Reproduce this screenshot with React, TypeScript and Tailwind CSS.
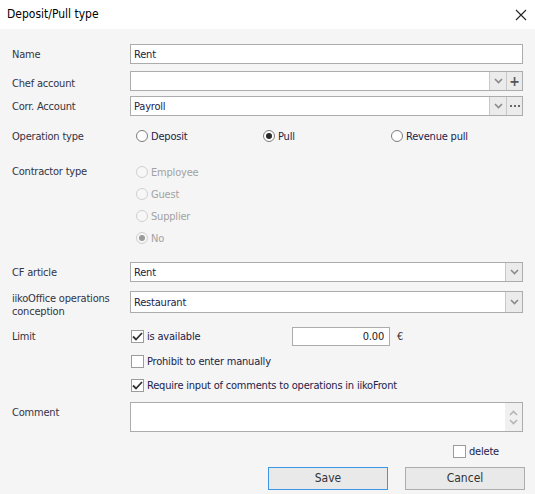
import React from 'react';

const font = "font-['DejaVu_Sans_Condensed','DejaVu_Sans',sans-serif]";

function Chevron({ light }: { light?: boolean }) {
  return (
    <svg width="9" height="6" viewBox="0 0 9 6">
      <path d="M1 1l3.5 3.5L8 1" fill="none" stroke={light ? '#b5b5b5' : '#8a8a8a'} strokeWidth="1.6" />
    </svg>
  );
}

function Field({ value, buttons }: { value?: string; buttons?: React.ReactNode }) {
  return (
    <div className="flex h-[20px] flex-1 border border-[#acacac] bg-white">
      <div className="flex flex-1 items-center pl-[3px] text-[#22224a]">{value}</div>
      {buttons}
    </div>
  );
}

function DropBtn() {
  return (
    <div className="flex w-[17px] items-center justify-center border-l border-[#c8c8c8] bg-[#ebebeb]">
      <Chevron />
    </div>
  );
}

function Radio({ label, checked, disabled, className = '' }: { label: string; checked?: boolean; disabled?: boolean; className?: string }) {
  return (
    <div className={`flex items-center gap-[3px] ${className}`}>
      <div
        className={`flex h-[12px] w-[12px] items-center justify-center rounded-full border ${
          disabled ? 'border-[#cfcfcf] bg-[#f7f7f7]' : 'border-[#7c7c7c] bg-white'
        }`}
      >
        {checked && <div className={`h-[6px] w-[6px] rounded-full ${disabled ? 'bg-[#9a9a9a]' : 'bg-[#2a2a2a]'}`} />}
      </div>
      <span className={disabled ? 'text-[#a2a2a2]' : 'text-[#22224a]'}>{label}</span>
    </div>
  );
}

function Check({ label, checked }: { label: string; checked?: boolean }) {
  return (
    <div className="flex items-center gap-[3px]">
      <div className="flex h-[13px] w-[13px] items-center justify-center border border-[#9c9c9c] bg-white">
        {checked && (
          <svg width="11" height="9" viewBox="0 0 11 9">
            <path d="M1 4.5l3 3L10 1" fill="none" stroke="#333" strokeWidth="1.8" />
          </svg>
        )}
      </div>
      <span className="text-[#22224a]">{label}</span>
    </div>
  );
}

function Label({ children, className = '' }: { children?: React.ReactNode; className?: string }) {
  return <div className={`w-[118px] shrink-0 text-[#333344] ${className}`}>{children}</div>;
}

export default function App() {
  return (
    <div className={`h-[494px] w-[535px] bg-[#f5f5f5] text-[11px] leading-[13px] tracking-[-0.2px] ${font}`}>
      <header className="flex h-[29px] items-center justify-between bg-white pl-[7px] pr-[8px]">
        <span className="text-[12px] tracking-normal text-black">Deposit/Pull type</span>
        <svg width="12" height="12" viewBox="0 0 12 12">
          <path d="M1 1l10 10M11 1L1 11" stroke="#222" strokeWidth="1.1" />
        </svg>
      </header>

      <section className="flex flex-col pl-[12px] pr-[12px]">
        <div className="mt-[15px] flex items-center">
          <Label>Name</Label>
          <Field value="Rent" />
        </div>
        <div className="mt-[7px] flex items-center">
          <Label className="pt-[4px]">Chef account</Label>
          <Field
            buttons={
              <>
                <DropBtn />
                <div className="flex w-[16px] items-center justify-center border-l border-[#c8c8c8] bg-[#ebebeb] text-[14px] font-bold text-[#555]">
                  +
                </div>
              </>
            }
          />
        </div>
        <div className="mt-[5px] flex items-center">
          <Label>Corr. Account</Label>
          <Field
            value="Payroll"
            buttons={
              <>
                <DropBtn />
                <div className="flex w-[16px] items-center justify-center gap-[2px] border-l border-[#c8c8c8] bg-[#ebebeb]">
                  <span className="h-[2px] w-[2px] bg-[#666]" />
                  <span className="h-[2px] w-[2px] bg-[#666]" />
                  <span className="h-[2px] w-[2px] bg-[#666]" />
                </div>
              </>
            }
          />
        </div>

        <div className="mt-[12px] flex h-[16px] items-center">
          <Label>Operation type</Label>
          <Radio label="Deposit" className="w-[133px] pl-[6px]" />
          <Radio label="Pull" checked className="w-[128px]" />
          <Radio label="Revenue pull" />
        </div>

        <div className="mt-[17px] flex">
          <Label className="pt-[4px]">Contractor type</Label>
          <div className="flex flex-col pl-[6px]">
            <Radio label="Employee" disabled className="h-[22px]" />
            <Radio label="Guest" disabled className="h-[22px]" />
            <Radio label="Supplier" disabled className="h-[22px]" />
            <Radio label="No" checked disabled className="h-[22px]" />
          </div>
        </div>

        <div className="mt-[13px] flex items-center">
          <Label>CF article</Label>
          <Field value="Rent" buttons={<DropBtn />} />
        </div>
        <div className="mt-[9px] flex h-[22px] items-start">
          <Label className="pt-[1px]">
            iikoOffice operations
            <br />
            conception
          </Label>
          <div className="flex h-[22px] flex-1 border border-[#acacac] bg-white">
            <div className="flex flex-1 items-center pl-[3px] text-[#22224a]">Restaurant</div>
            <DropBtn />
          </div>
        </div>

        <div className="mt-[14px] flex h-[19px] items-center">
          <Label>Limit</Label>
          <div className="w-[162px] pl-[1px]">
            <Check label="is available" checked />
          </div>
          <div className="flex h-[19px] w-[98px] items-center justify-end border border-[#acacac] bg-white pr-[5px] text-[#222]">
            0.00
          </div>
          <span className="pl-[7px] text-[#333]">€</span>
        </div>
        <div className="mt-[8px] flex h-[14px] items-center">
          <Label />
          <div className="pl-[1px]">
            <Check label="Prohibit to enter manually" />
          </div>
        </div>
        <div className="mt-[10px] flex h-[14px] items-center">
          <Label />
          <div className="pl-[1px]">
            <Check label="Require input of comments to operations in iikoFront" checked />
          </div>
        </div>

        <div className="mt-[10px] flex">
          <Label className="pt-[4px]">Comment</Label>
          <div className="flex h-[30px] flex-1 border border-[#acacac] bg-white">
            <div className="flex-1" />
            <div className="flex w-[17px] flex-col items-center justify-center gap-[3px] bg-[#f0f0f0]">
              <div className="rotate-180">
                <Chevron light />
              </div>
              <Chevron light />
            </div>
          </div>
        </div>

        <div className="mt-[13px] flex justify-end pr-[24px]">
          <Check label="delete" />
        </div>

        <div className="-mr-[2px] mt-[9px] flex justify-end gap-[17px]">
          <button className="h-[23px] w-[120px] border border-[#3c96e6] bg-[#e9e9e9] text-[12px] tracking-normal text-[#333]">Save</button>
          <button className="h-[23px] w-[120px] border border-[#adadad] bg-[#e9e9e9] text-[12px] tracking-normal text-[#333]">Cancel</button>
        </div>
      </section>
    </div>
  );
}
